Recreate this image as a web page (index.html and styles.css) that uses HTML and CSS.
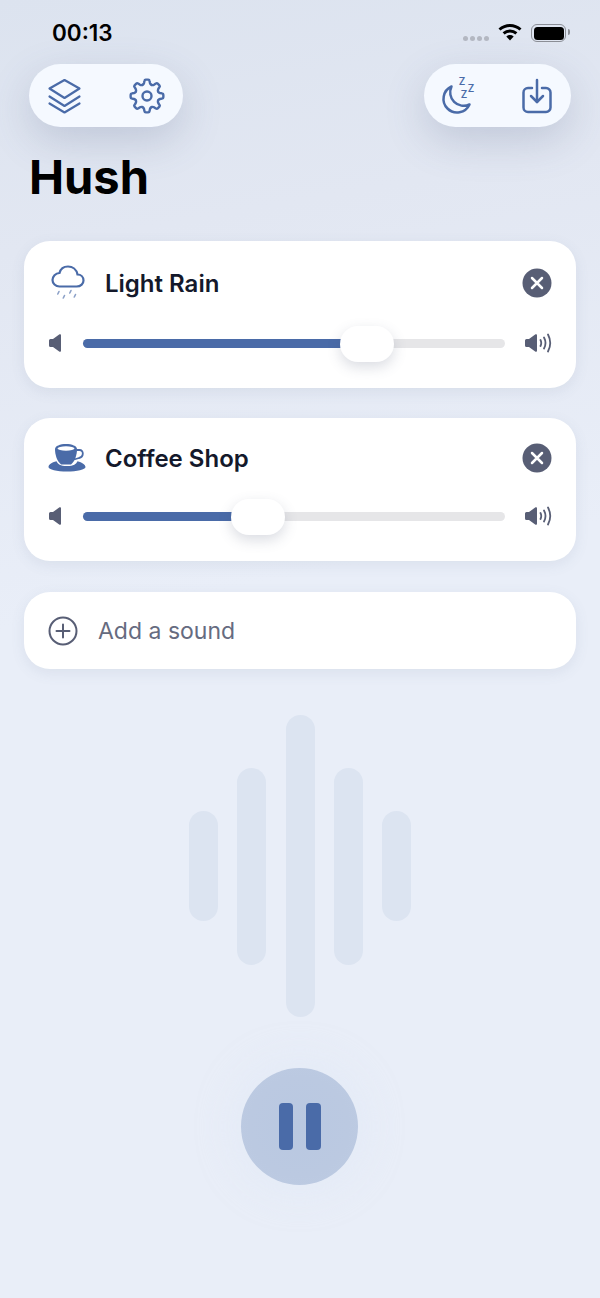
FILE: index.html
```html
<!DOCTYPE html>
<html lang="en">
<head>
    <meta charset="UTF-8">
    <meta name="viewport" content="width=device-width, initial-scale=1.0">
    <title>Hush</title>
    <link rel="stylesheet" href="styles.css">
</head>
<body>

    <!-- Status bar -->
    <div class="status-bar">
        <span class="time">00:13</span>
        <div class="status-icons">
            <div class="signal"><i></i><i></i><i></i><i></i></div>
            <svg class="wifi" width="24" height="18" viewBox="0 0 24 18">
                <path d="M1.500 6.500C7.500 1 16.500 1 22.500 6.500" fill="none" stroke="#000" stroke-width="3"/>
                <path d="M5.600 10.400C9.300 7.200 14.700 7.200 18.400 10.400" fill="none" stroke="#000" stroke-width="3"/>
                <path d="M8.300 13.400C10.500 11.600 13.500 11.600 15.700 13.400L12 17.500Z" fill="#000"/>
            </svg>
            <div class="battery"><div class="battery-fill"></div></div>
        </div>
    </div>

    <!-- Top buttons -->
    <div class="toolbar">
        <div class="pill pill-left">
            <svg width="36" height="36" viewBox="0 0 36 36" class="tool-icon layers">
                <path d="M17.500 2L32.500 10.500L17.500 20L2.500 10.500Z"/>
                <path d="M2.500 18.500L17.500 28L32.500 18.500"/>
                <path d="M2.500 25.500L17.500 34.500L32.500 25.500"/>
            </svg>
            <svg width="36" height="36" viewBox="0 0 24 24" class="tool-icon gear">
                <defs>
                    <path id="tooth" d="M-3.060-7.390Q-2.200-7.800-2-8.600L-1.700-10Q-1.600-10.900-.8-10.900H.8Q1.600-10.900 1.700-10L2-8.600Q2.200-7.800 3.060-7.390"/>
                </defs>
                <g transform="translate(12 12)">
                    <use href="#tooth"/>
                    <use href="#tooth" transform="rotate(45)"/>
                    <use href="#tooth" transform="rotate(90)"/>
                    <use href="#tooth" transform="rotate(135)"/>
                    <use href="#tooth" transform="rotate(180)"/>
                    <use href="#tooth" transform="rotate(225)"/>
                    <use href="#tooth" transform="rotate(270)"/>
                    <use href="#tooth" transform="rotate(315)"/>
                    <circle r="3"/>
                </g>
            </svg>
        </div>
        <div class="pill pill-right">
            <svg width="40" height="48" viewBox="0 -4 40 48" class="tool-icon">
                <path d="M12.500 10.500A13.600 13.600 0 1 0 30.500 28.500A13.500 13.500 0 0 1 12.500 10.500Z"/>
                <text x="19.800" y="8.600" class="zzz">Z</text>
                <text x="28.800" y="15.600" class="zzz">Z</text>
                <text x="21.800" y="21.600" class="zzz">Z</text>
            </svg>
            <svg width="32" height="36" viewBox="0 0 32 36" class="tool-icon">
                <path d="M11 10H7A4.500 4.500 0 0 0 2.500 14.500V29.500A4.500 4.500 0 0 0 7 34H25A4.500 4.500 0 0 0 29.500 29.500V14.500A4.500 4.500 0 0 0 25 10H21"/>
                <path d="M16 2V24"/>
                <path d="M10 18L16 24L22 18"/>
            </svg>
        </div>
    </div>

    <h1 class="title">Hush</h1>

    <!-- Sound list -->
    <div class="sounds">
        <div class="card">
            <div class="card-head">
                <svg class="sound-icon" width="40" height="40" viewBox="0 0 40 40">
                    <g transform="translate(0 2)">
                        <path class="cloud" d="M11.500 21.500H28.500C33 21.500 35.500 18.500 35.500 15.500C35.500 12 33 9.500 29.500 9.500C28.500 4.500 24.500 1.500 20 1.500C16 1.500 12.500 4 11.500 8C7.500 8 4.500 11.500 4.500 15C4.500 18.500 7.500 21.500 11.500 21.500Z"/>
                        <path class="rain" d="M11 26.500L9.800 29M16.500 30.500L15.300 33M23 25.500L21.800 28M27.500 29.500L26.300 32"/>
                    </g>
                </svg>
                <span class="sound-name">Light Rain</span>
                <svg class="close" width="30" height="30" viewBox="0 0 30 30">
                    <circle cx="15" cy="15" r="14.500" fill="#585e75"/>
                    <path d="M10 10L20 20M20 10L10 20" stroke="#fff" stroke-width="2.500" stroke-linecap="round"/>
                </svg>
            </div>
            <div class="slider-row">
                <svg class="vol-low" width="12" height="18" viewBox="0 0 12 18">
                    <path d="M0 6.500Q0 5 1.500 5H4L10.500 .3Q12 -.3 12 1.200V16.800Q12 18.300 10.500 17.700L4 13H1.500Q0 13 0 11.500Z" fill="#585e75"/>
                </svg>
                <div class="track">
                    <div class="fill" style="width: 62%"></div>
                    <div class="thumb" style="left: 60.900%"></div>
                </div>
                <svg class="vol-high" width="27" height="20" viewBox="0 0 27 20">
                    <path d="M0 7.500Q0 6 1.500 6H4L10.500 1.300Q12 .7 12 2.200V17.800Q12 19.300 10.500 18.700L4 14H1.500Q0 14 0 12.500Z" fill="#585e75"/>
                    <path d="M15.500 7Q17 10 15.500 13M19 4.500Q22 10 19 15.500M23 1.500Q27.500 10 23 18.500" fill="none" stroke="#585e75" stroke-width="1.800" stroke-linecap="round"/>
                </svg>
            </div>
        </div>

        <div class="card card-short">
            <div class="card-head">
                <svg class="sound-icon" width="40" height="40" viewBox="0 0 40 40">
                    <path d="M7 11C7 8 12 6 18 6C24 6 29 8 29 11C29 17 27 23 23 26.500H13C9 23 7 17 7 11Z" fill="#4a6ba8"/>
                    <ellipse cx="18" cy="10.500" rx="8.500" ry="2.200" fill="#fff"/>
                    <path d="M28.500 12H31.500C36 12 36 19 31 20L26 21.500" fill="none" stroke="#4a6ba8" stroke-width="1.800"/>
                    <path d="M.5 29C.5 26.500 3.500 24.500 8.500 23.200C10 26 12 28 19 28C26 28 28 26 29.500 23.200C34 24.500 37.500 26.500 37.500 29C37.500 31.500 29 33.500 19 33.500C9 33.500 .5 31.500 .5 29Z" fill="#4a6ba8"/>
                </svg>
                <span class="sound-name">Coffee Shop</span>
                <svg class="close" width="30" height="30" viewBox="0 0 30 30">
                    <circle cx="15" cy="15" r="14.500" fill="#585e75"/>
                    <path d="M10 10L20 20M20 10L10 20" stroke="#fff" stroke-width="2.500" stroke-linecap="round"/>
                </svg>
            </div>
            <div class="slider-row">
                <svg class="vol-low" width="12" height="18" viewBox="0 0 12 18">
                    <path d="M0 6.500Q0 5 1.500 5H4L10.500 .3Q12 -.3 12 1.200V16.800Q12 18.300 10.500 17.700L4 13H1.500Q0 13 0 11.500Z" fill="#585e75"/>
                </svg>
                <div class="track">
                    <div class="fill" style="width: 36%"></div>
                    <div class="thumb" style="left: 35%"></div>
                </div>
                <svg class="vol-high" width="27" height="20" viewBox="0 0 27 20">
                    <path d="M0 7.500Q0 6 1.500 6H4L10.500 1.300Q12 .7 12 2.200V17.800Q12 19.300 10.500 18.700L4 14H1.500Q0 14 0 12.500Z" fill="#585e75"/>
                    <path d="M15.500 7Q17 10 15.500 13M19 4.500Q22 10 19 15.500M23 1.500Q27.500 10 23 18.500" fill="none" stroke="#585e75" stroke-width="1.800" stroke-linecap="round"/>
                </svg>
            </div>
        </div>

        <div class="add-row">
            <svg width="30" height="30" viewBox="0 0 30 30">
                <circle cx="15" cy="15" r="13.500" fill="none" stroke="#585e75" stroke-width="2"/>
                <path d="M15 8.500V21.500M8.500 15H21.500" stroke="#585e75" stroke-width="2" stroke-linecap="round"/>
            </svg>
            <span class="add-label">Add a sound</span>
        </div>
    </div>

    <!-- Waveform -->
    <div class="wave">
        <div class="wave-bar bar-s"></div>
        <div class="wave-bar bar-m"></div>
        <div class="wave-bar bar-l"></div>
        <div class="wave-bar bar-m"></div>
        <div class="wave-bar bar-s"></div>
    </div>

    <div class="player">
        <div class="pause">
            <div class="pause-bar"></div>
            <div class="pause-bar"></div>
        </div>
    </div>

</body>
</html>
```

FILE: styles.css
```css
body {
    margin: 0;
    width: 600px;
    height: 1298px;
    overflow: hidden;
    font-family: Inter, "Liberation Sans", sans-serif;
    background: linear-gradient(170deg, #dce3ef 0, #e2e7f2 250px, #e9eef8 620px);
}
.status-bar {
    height: 64px;
    box-sizing: border-box;
    padding: 20px 34px 0 52px;
    display: flex;
    justify-content: space-between;
    align-items: flex-start;
}
.time {
    font-size: 22.500px;
    font-weight: 600;
    line-height: 26px;
    color: #000;
}
.status-icons {
    display: flex;
    align-items: flex-start;
    margin-top: 3px;
}
.signal {
    display: flex;
    gap: 2px;
    margin: 13px 9px 0 0;
}
.signal i {
    width: 5px;
    height: 5px;
    border-radius: 50%;
    background-color: #b4b8c2;
}
.wifi {
    margin-right: 9px;
}
.battery {
    position: relative;
    width: 35px;
    height: 18px;
    box-sizing: border-box;
    border: 1.500px solid #8b8e96;
    border-radius: 6px;
    padding: 1.500px;
    margin-top: 1px;
}
.battery::after {
    content: "";
    position: absolute;
    right: -5px;
    top: 4px;
    width: 2px;
    height: 6px;
    border-radius: 0 2px 2px 0;
    background-color: #8b8e96;
}
.battery-fill {
    height: 100%;
    background-color: #000;
    border-radius: 3.500px;
}
.toolbar {
    display: flex;
    justify-content: space-between;
    padding: 0 29px;
}
.pill {
    height: 63px;
    box-sizing: border-box;
    border-radius: 32px;
    background-color: #f5f9ff;
    display: flex;
    align-items: center;
    justify-content: space-between;
    box-shadow: 0 14px 40px rgba(80, 95, 130, 0.22);
}
.pill-left {
    width: 154px;
    padding: 0 18px;
}
.pill-right {
    width: 147px;
    padding: 0 18px 0 15px;
}
.tool-icon {
    fill: none;
    stroke: #4a6ba8;
    stroke-width: 2.500;
    stroke-linejoin: round;
    stroke-linecap: round;
}
.layers {
    stroke-width: 2.200;
}
.gear {
    stroke-width: 1.600;
}
.zzz {
    fill: #4a6ba8;
    stroke: none;
    font-size: 10px;
    font-weight: 600;
}
.title {
    margin: 21px 0 35px 29px;
    font-size: 47px;
    line-height: 58px;
    font-weight: 700;
    color: #000;
}
.sounds {
    display: flex;
    flex-direction: column;
    gap: 30px;
    padding: 0 24px;
}
.card {
    height: 147px;
    box-sizing: border-box;
    padding: 22px 24px 27px;
    background-color: #fff;
    border-radius: 26px;
    box-shadow: 0 4px 14px rgba(90, 105, 140, 0.1);
}
.card-short {
    height: 143px;
    padding-top: 20px;
}
.card-short .slider-row {
    margin-top: 20px;
}
.card-head {
    height: 40px;
    display: flex;
    align-items: center;
}
.sound-icon {
    flex-shrink: 0;
    margin-right: 17px;
    fill: none;
}
.cloud {
    fill: none;
    stroke: #4a6ba8;
    stroke-width: 2.200;
}
.rain {
    fill: none;
    stroke: #8ba0c7;
    stroke-width: 1.600;
    stroke-linecap: round;
}
.sound-name {
    flex: 1;
    font-size: 24px;
    font-weight: 600;
    color: #14192b;
}
.slider-row {
    height: 36px;
    margin-top: 22px;
    display: flex;
    align-items: center;
}
.vol-low {
    margin-left: 1px;
    flex-shrink: 0;
}
.vol-high {
    flex-shrink: 0;
    margin-left: 20px;
}
.track {
    position: relative;
    flex: 1;
    height: 9px;
    margin-left: 22px;
    border-radius: 5px;
    background-color: #e6e6e8;
}
.fill {
    height: 100%;
    border-radius: 5px;
    background-color: #4a6ba8;
}
.thumb {
    position: absolute;
    top: -13px;
    width: 54px;
    height: 36px;
    border-radius: 18px;
    background-color: #fff;
    box-shadow: 0 5px 14px rgba(70, 80, 110, 0.2);
}
.add-row {
    height: 77px;
    margin-top: 1px;
    padding-left: 24px;
    display: flex;
    align-items: center;
    background-color: #fff;
    border-radius: 26px;
    box-shadow: 0 4px 14px rgba(90, 105, 140, 0.1);
}
.add-label {
    margin-left: 20px;
    font-size: 23px;
    color: #666b80;
}
.wave {
    margin-top: 46px;
    height: 302px;
    display: flex;
    align-items: center;
    justify-content: center;
    gap: 19.250px;
}
.wave-bar {
    width: 29px;
    border-radius: 15px;
    background-color: #dce4f1;
}
.bar-s {
    height: 110px;
}
.bar-m {
    height: 197px;
}
.bar-l {
    height: 302px;
}
.player {
    margin-top: 51px;
    padding-right: 1px;
    display: flex;
    justify-content: center;
}
.pause {
    width: 117px;
    height: 117px;
    border-radius: 50%;
    display: flex;
    align-items: center;
    justify-content: center;
    gap: 13px;
    background: radial-gradient(circle, #b9c8e1 0, #bbc9e1 60%, #becce3 100%);
    box-shadow: 0 0 30px 12px rgba(226, 234, 247, 0.5);
}
.pause-bar {
    width: 14.500px;
    height: 47px;
    border-radius: 4px;
    background-color: #4a6ba8;
}
```
